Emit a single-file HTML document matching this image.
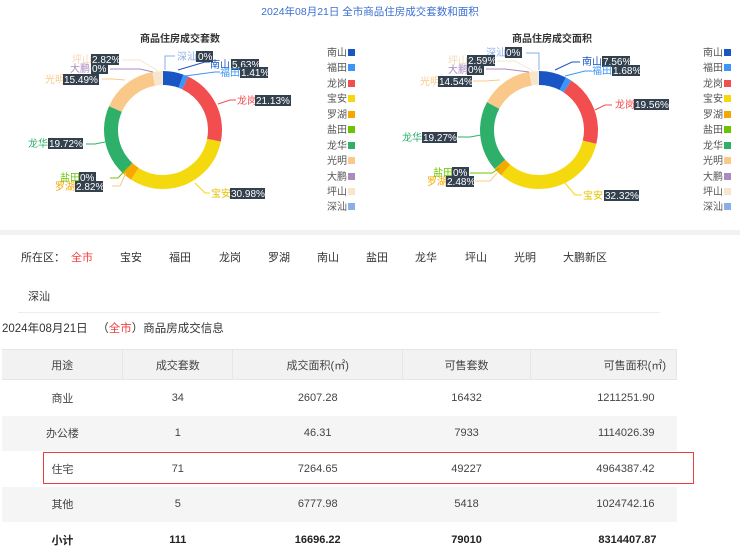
<!DOCTYPE html>
<html><head><meta charset="utf-8"><style>
body{margin:0;width:740px;height:558px;background:#fff;font-family:"Liberation Sans","Noto Sans CJK SC",sans-serif;position:relative;overflow:hidden;color:#333}
.a{position:absolute;white-space:nowrap}
.f{font-size:11px;color:#333;top:249px}
table{position:absolute;left:2px;top:349px;width:675px;border-collapse:collapse;font-size:11px;color:#444}
td{text-align:center;padding:0}
.h td{background:#f2f2f2;height:29px;border-right:1px solid #e6e6e6;border-top:1px solid #e6e6e6;border-bottom:1px solid #e6e6e6}
.g td{background:#f5f5f5}
tr.r td{height:35.5px}
.b td{font-weight:bold;color:#222}
</style></head><body>
<div class="a" style="left:0;width:740px;top:4px;text-align:center;font-size:10.5px;color:#3a6fd0">2024年08月21日 全市商品住房成交套数和面积</div>
<svg class="a" style="left:0;top:0" width="740" height="228" font-family="Liberation Sans,Noto Sans CJK SC,sans-serif" font-size="10">
<text x="180" y="42" text-anchor="middle" font-size="10" font-weight="bold" fill="#333">商品住房成交套数</text>
<text x="552" y="42" text-anchor="middle" font-size="10" font-weight="bold" fill="#333">商品住房成交面积</text>
<g transform="translate(163,130) rotate(-90)" fill="none" stroke-width="14">
<circle r="52" pathLength="100" stroke="#1a55c4" stroke-dasharray="5.63 100" stroke-dashoffset="0"/>
<circle r="52" pathLength="100" stroke="#3d96f5" stroke-dasharray="1.41 100" stroke-dashoffset="-5.63"/>
<circle r="52" pathLength="100" stroke="#f24d4f" stroke-dasharray="21.13 100" stroke-dashoffset="-7.04"/>
<circle r="52" pathLength="100" stroke="#f5d90f" stroke-dasharray="30.98 100" stroke-dashoffset="-28.17"/>
<circle r="52" pathLength="100" stroke="#f5a800" stroke-dasharray="2.82 100" stroke-dashoffset="-59.15"/>
<circle r="52" pathLength="100" stroke="#2fb06a" stroke-dasharray="19.72 100" stroke-dashoffset="-61.97"/>
<circle r="52" pathLength="100" stroke="#fac98a" stroke-dasharray="15.49 100" stroke-dashoffset="-81.69"/>
<circle r="52" pathLength="100" stroke="#f8e6cc" stroke-dasharray="2.82 100" stroke-dashoffset="-97.18"/>
</g>
<g transform="translate(539,130) rotate(-90)" fill="none" stroke-width="14">
<circle r="52" pathLength="100" stroke="#1a55c4" stroke-dasharray="7.56 100" stroke-dashoffset="0"/>
<circle r="52" pathLength="100" stroke="#3d96f5" stroke-dasharray="1.68 100" stroke-dashoffset="-7.56"/>
<circle r="52" pathLength="100" stroke="#f24d4f" stroke-dasharray="19.56 100" stroke-dashoffset="-9.24"/>
<circle r="52" pathLength="100" stroke="#f5d90f" stroke-dasharray="32.32 100" stroke-dashoffset="-28.8"/>
<circle r="52" pathLength="100" stroke="#f5a800" stroke-dasharray="2.48 100" stroke-dashoffset="-61.12"/>
<circle r="52" pathLength="100" stroke="#2fb06a" stroke-dasharray="19.27 100" stroke-dashoffset="-63.6"/>
<circle r="52" pathLength="100" stroke="#fac98a" stroke-dasharray="14.54 100" stroke-dashoffset="-82.87"/>
<circle r="52" pathLength="100" stroke="#f8e6cc" stroke-dasharray="2.59 100" stroke-dashoffset="-97.41"/>
</g>
<g fill="none" stroke-width="1">
<path d="M165 70 L165 56 L175 56" stroke="#8aaee8"/><path d="M178 70 L205 62 L210 62" stroke="#1a55c4"/><path d="M185 76 L215 72 L220 72" stroke="#3d96f5"/>
<path d="M218 104 L230 100 L236 100" stroke="#f24d4f"/><path d="M195 183 L205 193 L210 193" stroke="#f5d90f"/>
<path d="M128 167 L118 178 L110 178" stroke="#6cc400"/><path d="M126 173 L120 186 L112 186" stroke="#fac98a"/>
<path d="M105 142 L95 144 L86 144" stroke="#2fb06a"/><path d="M125 80 L112 79 L102 79" stroke="#fac98a"/>
<path d="M153 72 L140 69 L110 69" stroke="#a98bc2"/><path d="M158 71 L140 60 L122 60" stroke="#f8e6cc"/>
<path d="M539 70 L539 53 L526 53" stroke="#8aaee8"/><path d="M555 70 L572 62 L580 62" stroke="#1a55c4"/><path d="M565 76 L585 71 L592 71" stroke="#3d96f5"/>
<path d="M595 110 L605 105 L612 105" stroke="#f24d4f"/><path d="M565 183 L575 195 L582 195" stroke="#f5d90f"/>
<path d="M500 168 L492 173 L470 173" stroke="#6cc400"/><path d="M497 173 L490 181 L475 181" stroke="#fac98a"/>
<path d="M481 135 L470 137 L458 137" stroke="#2fb06a"/><path d="M500 80 L485 81 L473 81" stroke="#fac98a"/>
<path d="M529 72 L505 69 L486 69" stroke="#a98bc2"/><path d="M533 71 L515 61 L497 61" stroke="#f8e6cc"/>
</g>
<g>
<text x="177" y="60" fill="#8aaee8">深汕</text><rect x="196" y="51" width="17" height="11" fill="#33414f"/><text x="198" y="60" fill="#fff">0%</text>
<text x="210" y="68" fill="#1a55c4">南山</text><rect x="231" y="59" width="28" height="11" fill="#33414f"/><text x="232" y="68" fill="#fff">5.63%</text>
<text x="220" y="76" fill="#3d96f5">福田</text><rect x="240" y="67" width="28" height="11" fill="#33414f"/><text x="241" y="76" fill="#fff">1.41%</text>
<text x="237" y="104" fill="#f24d4f">龙岗</text><rect x="255" y="95" width="36" height="11" fill="#33414f"/><text x="256" y="104" fill="#fff">21.13%</text>
<text x="211" y="197" fill="#e5c200">宝安</text><rect x="230" y="188" width="35" height="11" fill="#33414f"/><text x="231" y="197" fill="#fff">30.98%</text>
<text x="60" y="181" fill="#6cc400">盐田</text><rect x="79" y="172" width="17" height="11" fill="#33414f"/><text x="80" y="181" fill="#fff">0%</text>
<text x="55" y="190" fill="#f5a800">罗湖</text><rect x="75" y="181" width="28" height="11" fill="#33414f"/><text x="76" y="190" fill="#fff">2.82%</text>
<text x="28" y="147" fill="#2fb06a">龙华</text><rect x="48" y="138" width="35" height="11" fill="#33414f"/><text x="49" y="147" fill="#fff">19.72%</text>
<text x="45" y="83" fill="#fac98a">光明</text><rect x="63" y="74" width="36" height="11" fill="#33414f"/><text x="64" y="83" fill="#fff">15.49%</text>
<text x="70" y="72" fill="#a98bc2">大鹏</text><rect x="91" y="63" width="17" height="11" fill="#33414f"/><text x="92" y="72" fill="#fff">0%</text>
<text x="72" y="63" fill="#f3d9b5">坪山</text><rect x="91" y="54" width="28" height="11" fill="#33414f"/><text x="92" y="63" fill="#fff">2.82%</text>
<text x="486" y="56" fill="#8aaee8">深汕</text><rect x="505" y="47" width="17" height="11" fill="#33414f"/><text x="506" y="56" fill="#fff">0%</text>
<text x="448" y="64" fill="#f3d9b5">坪山</text><rect x="467" y="55" width="28" height="11" fill="#33414f"/><text x="468" y="64" fill="#fff">2.59%</text>
<text x="448" y="73" fill="#a98bc2">大鹏</text><rect x="467" y="64" width="17" height="11" fill="#33414f"/><text x="468" y="73" fill="#fff">0%</text>
<text x="420" y="85" fill="#fac98a">光明</text><rect x="438" y="76" width="34" height="11" fill="#33414f"/><text x="439" y="85" fill="#fff">14.54%</text>
<text x="582" y="65" fill="#1a55c4">南山</text><rect x="602" y="56" width="28" height="11" fill="#33414f"/><text x="603" y="65" fill="#fff">7.56%</text>
<text x="592" y="74" fill="#3d96f5">福田</text><rect x="612" y="65" width="28" height="11" fill="#33414f"/><text x="613" y="74" fill="#fff">1.68%</text>
<text x="615" y="108" fill="#f24d4f">龙岗</text><rect x="634" y="99" width="35" height="11" fill="#33414f"/><text x="635" y="108" fill="#fff">19.56%</text>
<text x="402" y="141" fill="#2fb06a">龙华</text><rect x="422" y="132" width="35" height="11" fill="#33414f"/><text x="423" y="141" fill="#fff">19.27%</text>
<text x="433" y="176" fill="#6cc400">盐田</text><rect x="452" y="167" width="17" height="11" fill="#33414f"/><text x="453" y="176" fill="#fff">0%</text>
<text x="427" y="185" fill="#f5a800">罗湖</text><rect x="446" y="176" width="28" height="11" fill="#33414f"/><text x="447" y="185" fill="#fff">2.48%</text>
<text x="583" y="199" fill="#e5c200">宝安</text><rect x="604" y="190" width="35" height="11" fill="#33414f"/><text x="605" y="199" fill="#fff">32.32%</text>
</g>
<g font-size="10" fill="#555">
<text x="327" y="56">南山</text><rect x="348" y="49" width="7" height="7" fill="#1a55c4"/>
<text x="327" y="71">福田</text><rect x="348" y="64" width="7" height="7" fill="#3d96f5"/>
<text x="327" y="87">龙岗</text><rect x="348" y="80" width="7" height="7" fill="#f24d4f"/>
<text x="327" y="102">宝安</text><rect x="348" y="95" width="7" height="7" fill="#f5d90f"/>
<text x="327" y="118">罗湖</text><rect x="348" y="111" width="7" height="7" fill="#f5a800"/>
<text x="327" y="133">盐田</text><rect x="348" y="126" width="7" height="7" fill="#6cc400"/>
<text x="327" y="149">龙华</text><rect x="348" y="142" width="7" height="7" fill="#2fb06a"/>
<text x="327" y="164">光明</text><rect x="348" y="157" width="7" height="7" fill="#fac98a"/>
<text x="327" y="180">大鹏</text><rect x="348" y="173" width="7" height="7" fill="#a98bc2"/>
<text x="327" y="195">坪山</text><rect x="348" y="188" width="7" height="7" fill="#f8e6cc"/>
<text x="327" y="210">深汕</text><rect x="348" y="203" width="7" height="7" fill="#8aaee8"/>
</g>
<g font-size="10" fill="#555">
<text x="703" y="56">南山</text><rect x="724" y="49" width="7" height="7" fill="#1a55c4"/>
<text x="703" y="71">福田</text><rect x="724" y="64" width="7" height="7" fill="#3d96f5"/>
<text x="703" y="87">龙岗</text><rect x="724" y="80" width="7" height="7" fill="#f24d4f"/>
<text x="703" y="102">宝安</text><rect x="724" y="95" width="7" height="7" fill="#f5d90f"/>
<text x="703" y="118">罗湖</text><rect x="724" y="111" width="7" height="7" fill="#f5a800"/>
<text x="703" y="133">盐田</text><rect x="724" y="126" width="7" height="7" fill="#6cc400"/>
<text x="703" y="149">龙华</text><rect x="724" y="142" width="7" height="7" fill="#2fb06a"/>
<text x="703" y="164">光明</text><rect x="724" y="157" width="7" height="7" fill="#fac98a"/>
<text x="703" y="180">大鹏</text><rect x="724" y="173" width="7" height="7" fill="#a98bc2"/>
<text x="703" y="195">坪山</text><rect x="724" y="188" width="7" height="7" fill="#f8e6cc"/>
<text x="703" y="210">深汕</text><rect x="724" y="203" width="7" height="7" fill="#8aaee8"/>
</g>
</svg>
<div class="a" style="left:0;top:230px;width:740px;height:5px;background:#f2f2f2"></div>
<div class="a f" style="left:21px">所在区：</div>
<div class="a f" style="left:71px;color:#f24040">全市</div>
<div class="a f" style="left:120px">宝安</div><div class="a f" style="left:169px">福田</div><div class="a f" style="left:219px">龙岗</div><div class="a f" style="left:268px">罗湖</div><div class="a f" style="left:317px">南山</div><div class="a f" style="left:366px">盐田</div><div class="a f" style="left:415px">龙华</div><div class="a f" style="left:465px">坪山</div><div class="a f" style="left:514px">光明</div><div class="a f" style="left:563px">大鹏新区</div>
<div class="a f" style="left:28px;top:288px">深汕</div>
<div class="a" style="left:18px;top:312px;width:642px;height:1px;background:#eee"></div>
<div class="a" style="left:2px;top:320px;font-size:11.5px;color:#333">2024年08月21日 &nbsp;&nbsp;（<span style="color:#f24040">全市</span>）商品房成交信息</div>
<table>
<colgroup><col style="width:121px"><col style="width:110px"><col style="width:170px"><col style="width:128px"><col style="width:146px"></colgroup>
<tr class="h"><td>用途</td><td>成交套数</td><td>成交面积(㎡)</td><td>可售套数</td><td style="text-align:right;padding-right:10px">可售面积(㎡)</td></tr>
<tr class="r"><td>商业</td><td>34</td><td>2607.28</td><td>16432</td><td style="text-align:right;padding-right:22px">1211251.90</td></tr>
<tr class="r g"><td>办公楼</td><td>1</td><td>46.31</td><td>7933</td><td style="text-align:right;padding-right:22px">1114026.39</td></tr>
<tr class="r"><td>住宅</td><td>71</td><td>7264.65</td><td>49227</td><td style="text-align:right;padding-right:22px">4964387.42</td></tr>
<tr class="r g"><td>其他</td><td>5</td><td>6777.98</td><td>5418</td><td style="text-align:right;padding-right:22px">1024742.16</td></tr>
<tr class="r b"><td>小计</td><td>111</td><td>16696.22</td><td>79010</td><td style="text-align:right;padding-right:20px">8314407.87</td></tr>
</table>
<div class="a" style="left:43px;top:452px;width:649px;height:30px;border:1.5px solid #f03c3c"></div>
</body></html>
